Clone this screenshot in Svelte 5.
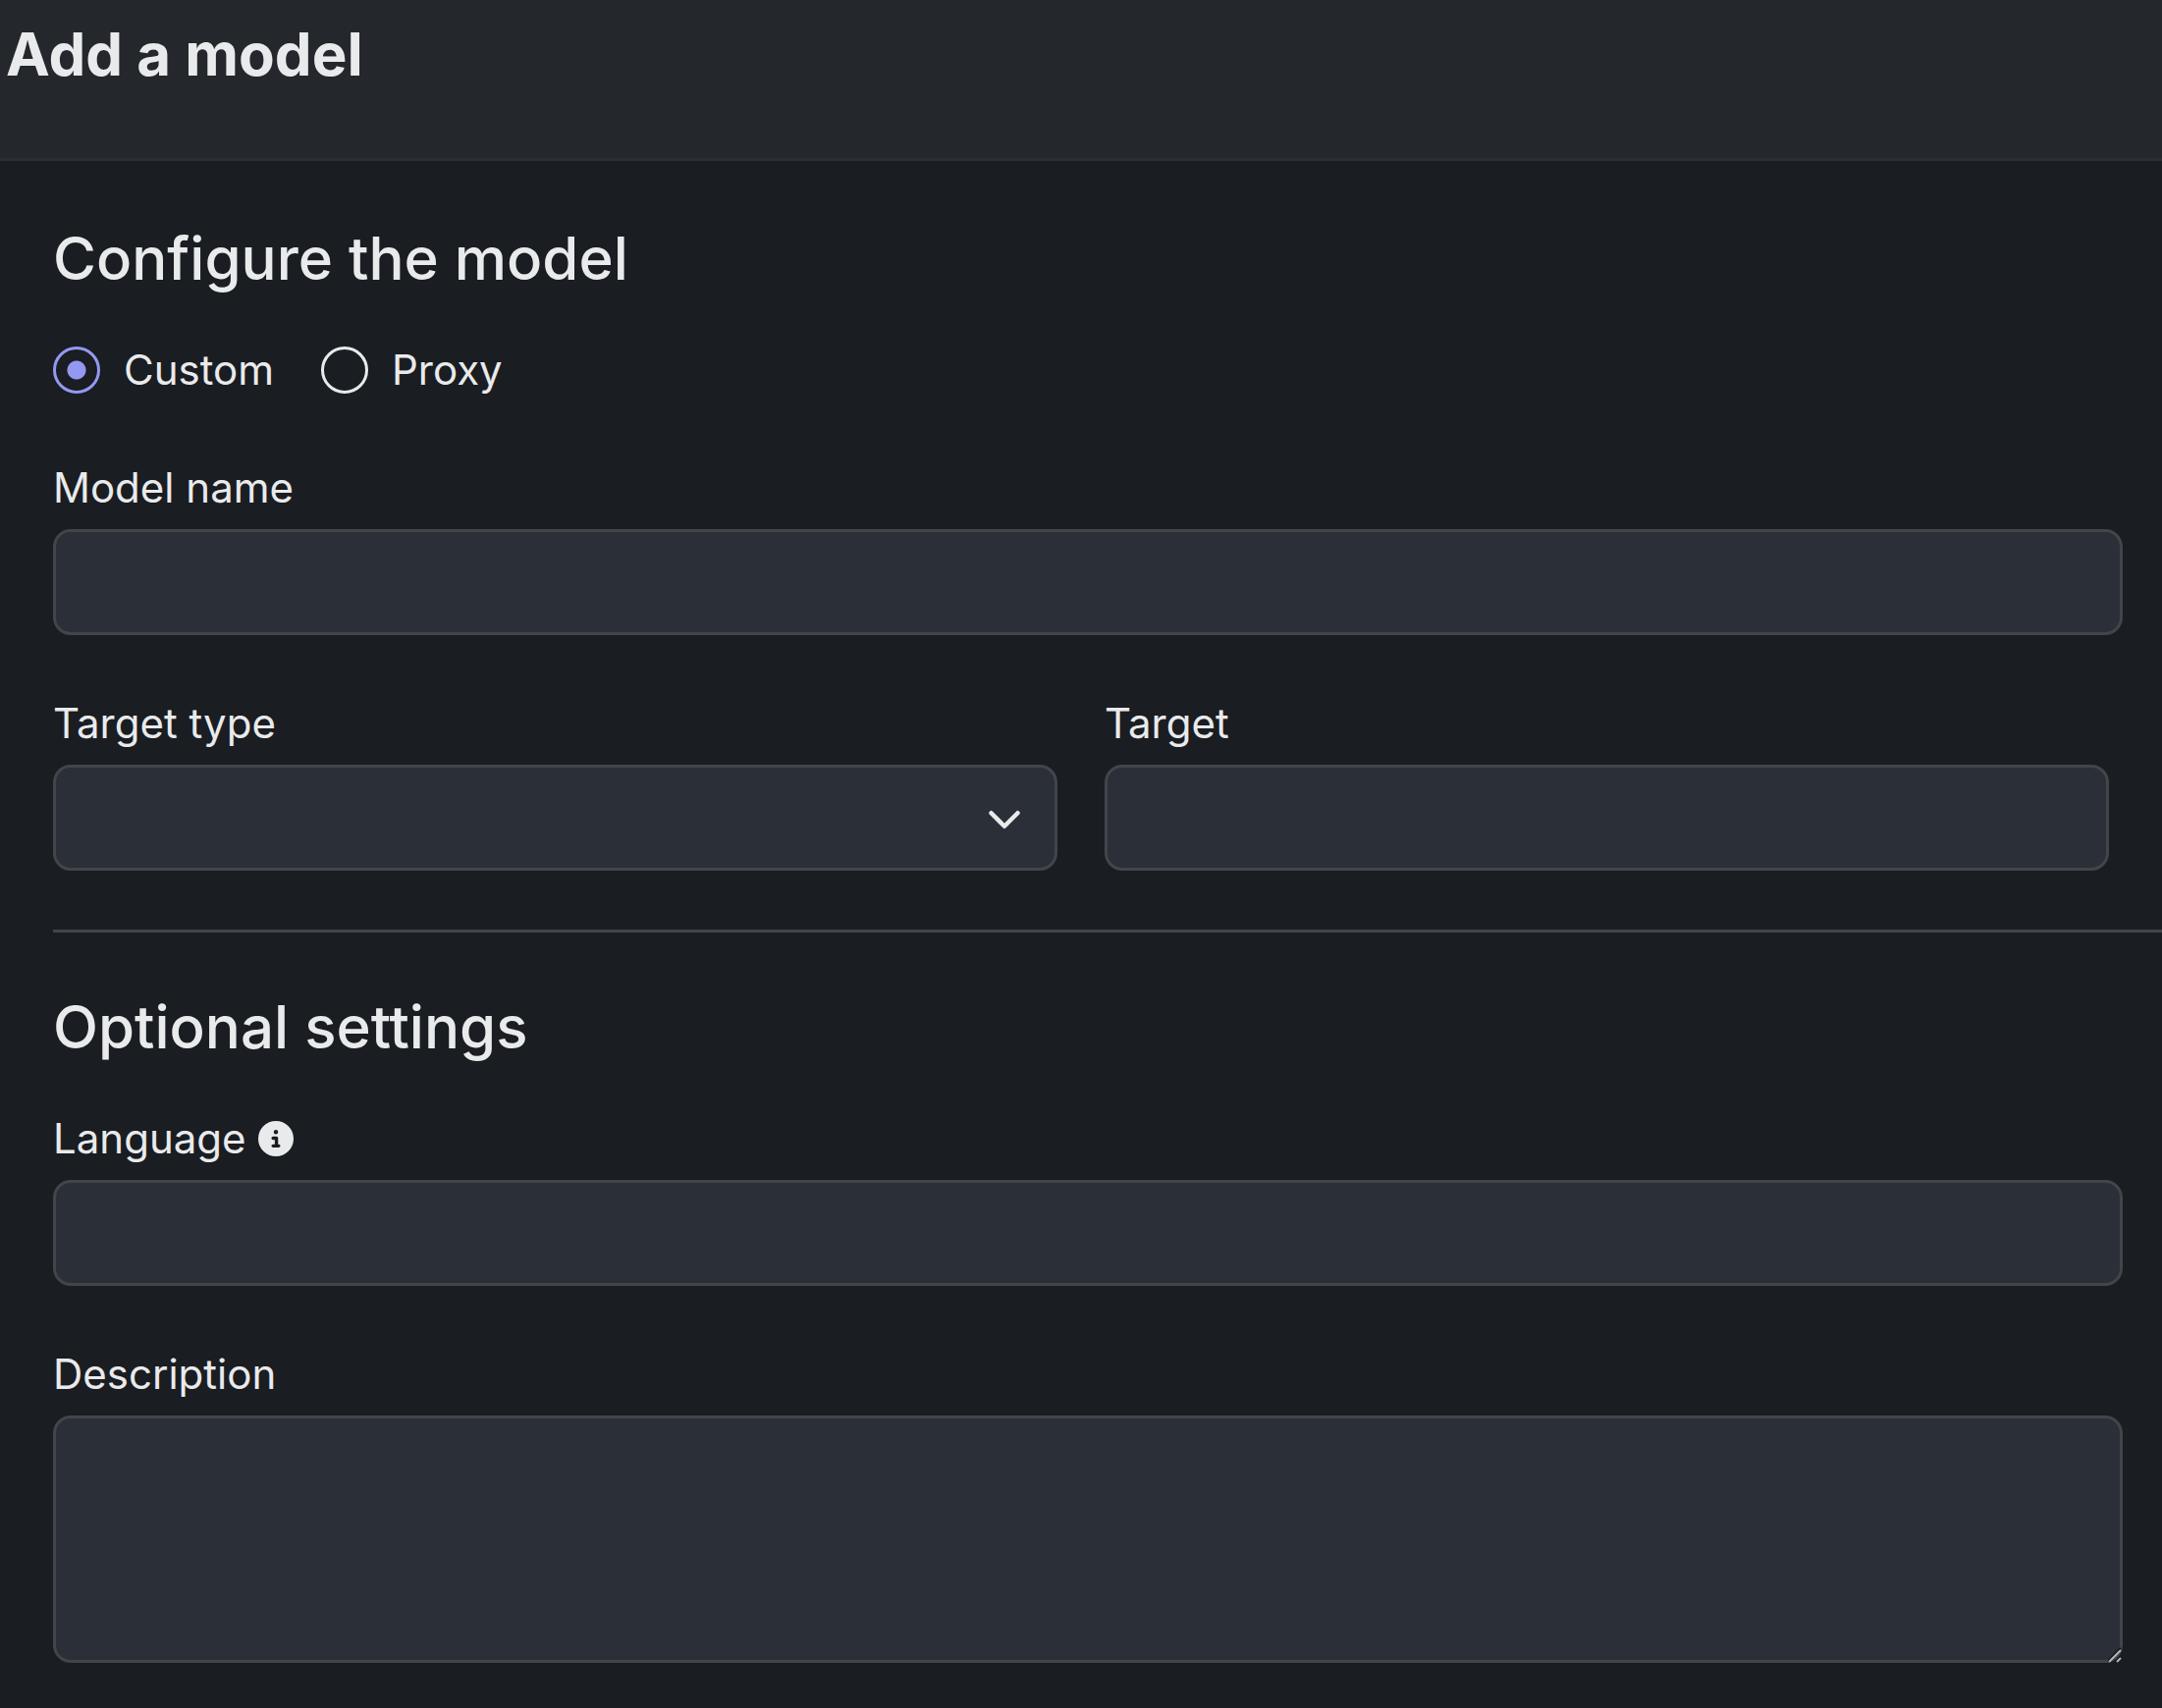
<script>
  let kind = $state('custom');
  let modelName = $state('');
  let targetType = $state('');
  let target = $state('');
  let language = $state('');
  let description = $state('');
</script>

<header>
  <h1>Add a model</h1>
</header>

<main>
  <form>
    <section>
      <h2>Configure the model</h2>

      <div class="choices" role="radiogroup" aria-label="Model kind">
        <label class="choice">
          <input type="radio" name="kind" value="custom" bind:group={kind} />
          Custom
        </label>
        <label class="choice">
          <input type="radio" name="kind" value="proxy" bind:group={kind} />
          Proxy
        </label>
      </div>

      <div class="fields">
        <div class="field wide">
          <label for="model-name">Model name</label>
          <input id="model-name" class="control" type="text" bind:value={modelName} />
        </div>

        <div class="pair">
          <div class="field">
            <label for="target-type">Target type</label>
            <div class="select">
              <select id="target-type" class="control" bind:value={targetType}>
                <option value=""></option>
              </select>
              <svg viewBox="0 0 16 16" aria-hidden="true">
                <path d="m2 5 6 6 6-6" />
              </svg>
            </div>
          </div>
          <div class="field">
            <label for="target">Target</label>
            <input id="target" class="control" type="text" bind:value={target} />
          </div>
        </div>
      </div>
    </section>

    <hr />

    <section>
      <h2>Optional settings</h2>

      <div class="fields">
        <div class="field wide">
          <div class="label-row">
            <label for="language">Language</label>
            <svg class="info" viewBox="0 0 512 512" role="img" aria-label="More information">
              <path
                d="M256 512A256 256 0 1 0 256 0a256 256 0 1 0 0 512zM216 336h24V272H216c-13.3 0-24-10.7-24-24s10.7-24 24-24h48c13.3 0 24 10.7 24 24v88h8c13.3 0 24 10.7 24 24s-10.7 24-24 24H216c-13.3 0-24-10.7-24-24s10.7-24 24-24zm40-208a32 32 0 1 1 0 64 32 32 0 1 1 0-64z"
              />
            </svg>
          </div>
          <input id="language" class="control" type="text" bind:value={language} />
        </div>

        <div class="field wide">
          <label for="description">Description</label>
          <div class="area">
            <textarea id="description" class="control" bind:value={description}></textarea>
            <svg class="grip" viewBox="0 0 16 16" aria-hidden="true">
              <path class="shade" d="M1 14 14 1M9 15l5-5" />
              <path class="line" d="M2 15 14 3M10 15l4-4" />
            </svg>
          </div>
        </div>
      </div>
    </section>
  </form>
</main>

<style>
  :global(body) {
    background: #1a1d21;
    color: #e9eaec;
    font-family: Inter, 'Liberation Sans', sans-serif;
    font-size: 42px;
    line-height: 60px;
  }

  header {
    padding: 19px 6px 70px;
    background: #24272c;
    border-bottom: 3px solid #2c2f34;
  }

  h1,
  h2 {
    margin: 0;
    font-size: 60px;
    line-height: 72px;
  }

  h1 {
    font-weight: 700;
  }

  h2 {
    margin-bottom: 48px;
    font-weight: 500;
  }

  main {
    padding: 63px 54px 46px;
  }

  .choices {
    display: flex;
    gap: 48px;
    margin-bottom: 60px;
  }

  .choice {
    display: flex;
    align-items: center;
    gap: 24px;
  }

  .choice input {
    appearance: none;
    box-sizing: border-box;
    width: 48px;
    height: 48px;
    margin: 0;
    border: 3px solid #e9eaec;
    border-radius: 50%;
  }

  .choice input:checked {
    border-color: #9399f0;
    background: radial-gradient(circle, #9399f0 9px, transparent 10px);
  }

  .fields {
    display: flex;
    flex-direction: column;
    gap: 60px;
  }

  .field {
    display: flex;
    flex-direction: column;
    gap: 12px;
    min-width: 0;
  }

  .wide {
    margin-right: -14px;
  }

  .pair {
    display: grid;
    grid-template-columns: 1fr 1fr;
    gap: 48px;
  }

  .label-row {
    display: flex;
    align-items: center;
    gap: 12px;
  }

  .info {
    width: 36px;
    height: 36px;
    fill: #e9eaec;
  }

  .control {
    appearance: none;
    display: block;
    box-sizing: border-box;
    width: 100%;
    height: 108px;
    margin: 0;
    padding: 20px 36px;
    border: 3px solid #42464b;
    border-radius: 18px;
    background: #2b2f37;
    color: inherit;
    font: inherit;
  }

  .control:focus {
    outline: none;
    border-color: #9399f0;
  }

  textarea.control {
    height: 252px;
    resize: none;
  }

  .select,
  .area {
    position: relative;
  }

  .select svg {
    position: absolute;
    top: 38px;
    right: 36px;
    width: 36px;
    height: 36px;
    fill: none;
    stroke: #e9eaec;
    stroke-width: 2;
    stroke-linecap: round;
    stroke-linejoin: round;
    pointer-events: none;
  }

  .grip {
    position: absolute;
    right: 0;
    bottom: 0;
    width: 16px;
    height: 16px;
    fill: none;
    pointer-events: none;
  }

  .grip .shade {
    stroke: #15171a;
    stroke-width: 2;
  }

  .grip .line {
    stroke: #b4b5b7;
    stroke-width: 2;
  }

  hr {
    height: 3px;
    margin: 60px -54px 60px 0;
    border: 0;
    background: #42464b;
  }
</style>
